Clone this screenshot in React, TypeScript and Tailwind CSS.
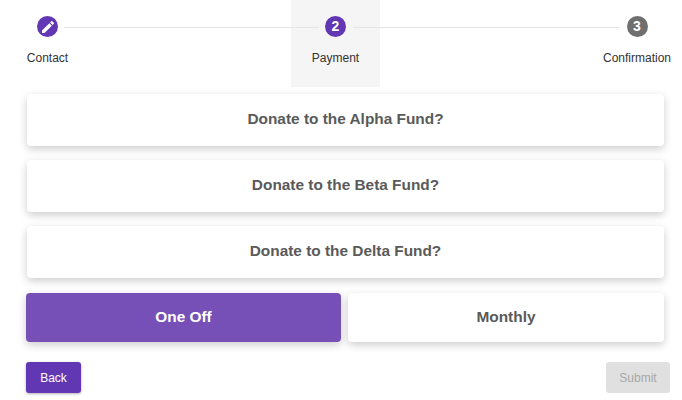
const funds = ['Alpha', 'Beta', 'Delta'];
const cardShadow = 'shadow-[0_3px_8px_rgba(0,0,0,0.2)]';

function Circle({ children, className }: { children: React.ReactNode; className: string }) {
  return (
    <div className={`flex h-[21px] w-[21px] items-center justify-center rounded-full text-[14px] font-bold text-white ${className}`}>
      {children}
    </div>
  );
}

function Connector({ className }: { className: string }) {
  return <div className={`relative z-10 mt-[27px] h-px shrink-0 bg-[#e4e4e4] ${className}`} />;
}

export default function App() {
  return (
    <div className="h-[400px] w-[682px] overflow-hidden bg-white font-['Liberation_Sans',sans-serif]">
      <div className="flex h-[87px] pl-[27px]">
        <div className="flex w-[41px] shrink-0 flex-col items-center pt-[16px]">
          <Circle className="bg-[#6237b4]">
            {/* material edit glyph */}
            <svg viewBox="0 0 24 24" width="16" height="16" fill="white">
              <path d="M3 17.25V21h3.75L17.81 9.94l-3.75-3.75L3 17.25zM20.71 7.04a1 1 0 0 0 0-1.41l-2.34-2.34a1 1 0 0 0-1.41 0l-1.83 1.83 3.75 3.75 1.83-1.83z" />
            </svg>
          </Circle>
          <span className="mt-[13px] text-[12px] leading-[16px] text-[#333]">Contact</span>
        </div>
        <Connector className="-ml-[4px] -mr-[28px] w-[255px]" />
        <div className="flex w-[89px] shrink-0 flex-col items-center bg-[#f5f5f5] pt-[16px]">
          <Circle className="relative z-20 bg-[#6237b4]">2</Circle>
          <span className="mt-[13px] text-[12px] leading-[16px] text-[#333]">Payment</span>
        </div>
        <Connector className="-ml-[27px] -mr-[16px] w-[266px]" />
        <div className="flex w-[68px] shrink-0 flex-col items-center pt-[16px]">
          <Circle className="bg-[#6f6f6f]">3</Circle>
          <span className="mt-[13px] text-[12px] leading-[16px] text-[#333]">Confirmation</span>
        </div>
      </div>

      <div className="ml-[27px] mt-[7px] flex w-[637px] flex-col gap-[14px]">
        {funds.map((f) => (
          <div key={f} className={`flex h-[52px] items-center justify-center rounded-[4px] bg-white pb-[2px] text-[15.4px] font-bold text-[#5a5a5a] ${cardShadow}`}>
            Donate to the {f} Fund?
          </div>
        ))}
      </div>

      <div className="ml-[26px] mt-[15px] flex w-[638px] gap-[7px]">
        <div className={`flex h-[49px] w-[315px] items-center justify-center rounded-[4px] bg-[#7650b7] pb-[1px] text-[15.4px] font-bold text-white ${cardShadow}`}>
          One Off
        </div>
        <div className={`flex h-[49px] flex-1 items-center justify-center rounded-[4px] bg-white pb-[1px] text-[15.4px] font-bold text-[#5a5a5a] ${cardShadow}`}>
          Monthly
        </div>
      </div>

      <div className="ml-[26px] mt-[20px] flex w-[644px] justify-between">
        <button className="h-[31px] w-[55px] rounded-[3px] bg-[#6237b4] text-[12px] text-white shadow-[0_1px_3px_rgba(0,0,0,0.3)]">Back</button>
        <button className="h-[31px] w-[64px] rounded-[3px] bg-[#e0e0e0] text-[12px] text-[#a8a8a8]">Submit</button>
      </div>
    </div>
  );
}
